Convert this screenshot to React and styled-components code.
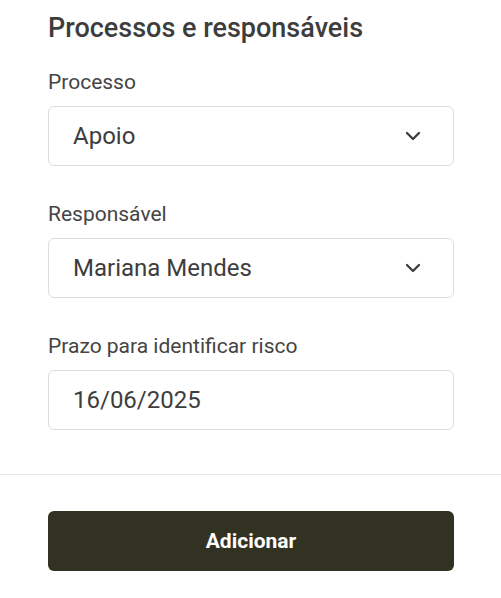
import React from "react";
import styled, { createGlobalStyle } from "styled-components";
import { ChevronDown } from "lucide-react";

const GlobalStyle = createGlobalStyle`
  * { box-sizing: border-box; }
  body {
    margin: 0;
    background: #fff;
    font-family: Roboto, "Liberation Sans", sans-serif;
    color: #3d3d3d;
  }
`;

const Panel = styled.div`
  width: 501px;
  display: flex;
  flex-direction: column;
`;

const Body = styled.div`
  padding: 12px 47px 44px 48px;
  display: flex;
  flex-direction: column;
`;

const Title = styled.h2`
  margin: 0 0 26px;
  font-size: 27px;
  line-height: 32px;
  font-weight: 500;
  color: #3d3d3d;
`;

const Field = styled.div`
  display: flex;
  flex-direction: column;
  gap: 12px;
  & + & {
    margin-top: 36px;
  }
`;

const Label = styled.label`
  font-size: 21px;
  line-height: 24px;
  color: #444;
`;

const Box = styled.div`
  height: 60px;
  border: 1px solid #dcdcdc;
  border-radius: 6px;
  display: flex;
  align-items: center;
  justify-content: space-between;
  padding: 0 28px 0 24px;
  font-size: 24px;
  color: #3d3d3d;
`;

const Divider = styled.hr`
  margin: 0;
  border: 0;
  border-top: 1px solid #e6e6e6;
`;

const Footer = styled.div`
  padding: 36px 47px 27px 48px;
`;

const Button = styled.button`
  width: 100%;
  height: 60px;
  border: 0;
  border-radius: 6px;
  background: #323222;
  color: #fff;
  font-family: Roboto, "Liberation Sans", sans-serif;
  font-size: 21px;
  font-weight: 700;
`;

function Select({ value }) {
  return (
    <Box>
      <span>{value}</span>
      <ChevronDown size={24} strokeWidth={2.3} color="#3d3d3d" />
    </Box>
  );
}

export default function App() {
  return (
    <>
      <GlobalStyle />
      <Panel>
        <Body>
          <Title>Processos e responsáveis</Title>
          <Field>
            <Label>Processo</Label>
            <Select value="Apoio" />
          </Field>
          <Field>
            <Label>Responsável</Label>
            <Select value="Mariana Mendes" />
          </Field>
          <Field>
            <Label>Prazo para identificar risco</Label>
            <Box>16/06/2025</Box>
          </Field>
        </Body>
        <Divider />
        <Footer>
          <Button>Adicionar</Button>
        </Footer>
      </Panel>
    </>
  );
}
